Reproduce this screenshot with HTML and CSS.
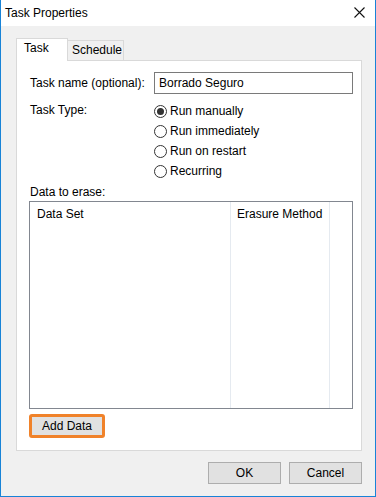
FILE: index.html
```html
<!DOCTYPE html>
<html lang="en">
<head>
    <meta charset="UTF-8">
    <title>Task Properties</title>
    <link rel="stylesheet" href="styles.css">
</head>
<body>
    <div class="window">
        <div class="titlebar">
            <span class="title">Task Properties</span>
            <svg class="close" width="11" height="11" viewBox="0 0 11 11">
                <path d="M0.5 0.5 L10.5 10.5 M10.5 0.5 L0.5 10.5" stroke="#111" stroke-width="1.1" fill="none"/>
            </svg>
        </div>

        <div class="content">
            <div class="tabs">
                <div class="tab active">Task</div>
                <div class="tab">Schedule</div>
            </div>

            <div class="panel">
                <div class="row name-row">
                    <label class="label" for="task_name">Task name (optional):</label>
                    <input class="textbox" type="text" id="task_name" value="Borrado Seguro">
                </div>

                <div class="row type-row">
                    <span class="label">Task Type:</span>
                    <div class="radios">
                        <div class="radio checked"><span class="dot"></span>Run manually</div>
                        <div class="radio"><span class="dot"></span>Run immediately</div>
                        <div class="radio"><span class="dot"></span>Run on restart</div>
                        <div class="radio"><span class="dot"></span>Recurring</div>
                    </div>
                </div>

                <div class="label erase-label">Data to erase:</div>
                <div class="listview">
                    <div class="col col-set"><div class="head">Data Set</div></div>
                    <div class="col col-method"><div class="head">Erasure Method</div></div>
                    <div class="col col-rest"></div>
                </div>

                <button class="btn add-btn">Add Data</button>
            </div>

            <div class="footer">
                <button class="btn">OK</button>
                <button class="btn">Cancel</button>
            </div>
        </div>
    </div>
</body>
</html>
```

FILE: styles.css
```css
* {
    box-sizing: border-box;
}
body {
    margin: 0;
    font-family: "Liberation Sans", Arial, sans-serif;
    font-size: 12px;
    color: #000;
}
.window {
    width: 376px;
    height: 497px;
    border: 1px solid #1883d7;
    border-top: none;
    background: #f0f0f0;
    display: flex;
    flex-direction: column;
}
.titlebar {
    height: 26px;
    background: #fff;
    display: flex;
    align-items: center;
    justify-content: space-between;
    padding: 0 10px 1px 4px;
}
.title {
    font-size: 12px;
}
.close {
    display: block;
}
.content {
    padding: 12px 13px 0 15px;
    display: flex;
    flex-direction: column;
}
.tabs {
    display: flex;
    height: 22px;
    align-items: flex-end;
}
.tab {
    border: 1px solid #d9d9d9;
    border-bottom: none;
    height: 20px;
    padding: 2px 0 0 4px;
    width: 57px;
    margin-left: -1px;
}
.tab.active {
    background: #fff;
    height: 23px;
    width: 52px;
    margin-left: 0;
    margin-bottom: -1px;
    padding: 2px 0 0 7px;
    position: relative;
    z-index: 1;
}
.panel {
    height: 391px;
    background: #fff;
    border: 1px solid #d9d9d9;
    padding: 11px 8px 0 12px;
}
.row {
    display: flex;
}
.label {
    width: 125px;
    padding-left: 1px;
}
.name-row {
    align-items: center;
    height: 22px;
}
.textbox {
    flex: 1;
    height: 22px;
    margin: 0;
    border: 1px solid #7a7a7a;
    padding: 0 4px;
    font-family: inherit;
    font-size: 12px;
    outline: none;
}
.type-row {
    margin-top: 7px;
}
.type-row .label {
    line-height: 18px;
}
.radios {
    display: flex;
    flex-direction: column;
}
.radio {
    display: flex;
    align-items: center;
    height: 20px;
}
.dot {
    width: 13px;
    height: 13px;
    border: 1px solid #333;
    border-radius: 50%;
    margin-right: 3px;
    display: flex;
    align-items: center;
    justify-content: center;
}
.radio.checked .dot::after {
    content: "";
    width: 7px;
    height: 7px;
    border-radius: 50%;
    background: #333;
}
.erase-label {
    margin-top: 3px;
    height: 17px;
    line-height: 16px;
}
.listview {
    height: 208px;
    border: 1px solid #828790;
    display: grid;
    grid-template-columns: 201px 99px 1fr;
}
.col {
    border-right: 1px solid #e5eaf0;
}
.col-rest {
    border-right: none;
}
.head {
    height: 24px;
    line-height: 24px;
    padding-left: 7px;
}
.col-method .head {
    padding-left: 6px;
}
.btn {
    font-family: inherit;
    font-size: 12px;
    background: #e1e1e1;
    border: 1px solid #adadad;
    height: 22px;
    width: 73px;
    padding: 0;
    color: #000;
}
.add-btn {
    margin-top: 5px;
    height: 24px;
    width: 76px;
    border: 3px solid #f0822a;
    border-radius: 3px;
}
.footer {
    display: flex;
    justify-content: flex-end;
    gap: 8px;
    margin-top: 11px;
}
```
